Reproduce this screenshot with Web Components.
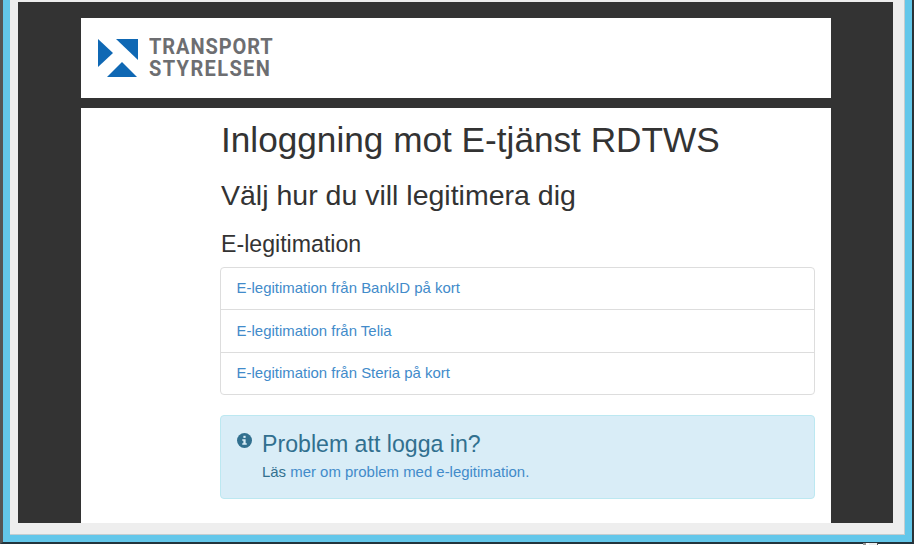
<!DOCTYPE html>
<html lang="sv">
<head>
<meta charset="utf-8">
<title>Inloggning</title>
<style>
  html, body { margin: 0; padding: 0; height: 545px; overflow: hidden; background: #fff; }
  body { font-family: "Liberation Sans", Arial, sans-serif; }
</style>
</head>
<body>
<app-window>
  <site-header slot="header"></site-header>
  <h-title level="1">Inloggning mot E-tjänst RDTWS</h-title>
  <h-title level="2">Välj hur du vill legitimera dig</h-title>
  <h-title level="3">E-legitimation</h-title>
  <login-list>
    <login-item>E-legitimation från BankID på kort</login-item>
    <login-item>E-legitimation från Telia</login-item>
    <login-item>E-legitimation från Steria på kort</login-item>
  </login-list>
  <info-box heading="Problem att logga in?">Läs <a href="#" style="color:#428bca;text-decoration:none">mer om problem med e-legitimation.</a></info-box>
</app-window>

<script>
// Outer browser window chrome plus the dark page background
class AppWindow extends HTMLElement {
  constructor(){
    super()
    this.attachShadow({mode: 'open'}).innerHTML = `
      <style>
        :host { display: block; position: relative; height: 545px; box-sizing: border-box; border-bottom: 1px solid #fff; }
        * { box-sizing: border-box; }
        .frame {
          height: 544px;
          border-left: 3px solid #555;
          border-right: 2px solid #2a3338;
          border-bottom: 2px solid #22343d;
        }
        .blue { height: 100%; border: solid #63c7ea; border-width: 0 7px 7px 7px; }
        .grey { height: 100%; background: #eee; padding: 2px 12px 12px 8px; box-shadow: inset -1px -1px 0 #c4cdd0; }
        .dark { height: 100%; background: #333; padding: 16px 62px 0 63px; }
        .head { height: 80px; background: #fff; margin-bottom: 10px; }
        .main { height: 415px; background: #fff; padding: 0 16px 0 139px; }
        /* bit of the window behind, peeking out under the frame */
        .behind { position: absolute; left: 863px; top: 543px; width: 15px; height: 2px; background: linear-gradient(90deg, #999 0 3px, #fff 3px 6px, #eee 6px 14px, #555 14px); }
      </style>
      <div class="frame"><div class="blue"><div class="grey"><div class="dark">
        <div class="head"><slot name="header"></slot></div>
        <div class="main"><slot></slot></div>
      </div></div></div></div>
      <div class="behind"></div>`
  }
}
customElements.define('app-window', AppWindow)

class SiteHeader extends HTMLElement {
  constructor(){
    super()
    this.attachShadow({mode: 'open'}).innerHTML = `
      <style>
        :host { display: flex; align-items: center; height: 80px; padding-left: 17px; gap: 11px; box-sizing: border-box; }
        svg { display: block; flex: none; margin-top: -1px; }
        .name {
          font: 700 22px/22px "Roboto", "Liberation Sans", sans-serif;
          color: #6d6e71;
          margin-top: -1px;
          transform: scaleX(.91);
          transform-origin: 0 50%;
        }
        .name span { display: block; white-space: nowrap; letter-spacing: 1px; }
        .name span + span { letter-spacing: 1.5px; }
      </style>
      <svg width="40" height="40" viewBox="0 0 40 40">
        <path fill="#0f68b4" d="M0 1 L15 15 L0 29 Z"/>
        <path fill="#0f68b4" d="M18 1 L40 1 L40 22 Z"/>
        <path fill="#0f68b4" d="M9 39 L24 24 L39 39 Z"/>
      </svg>
      <div class="name"><span>TRANSPORT</span><span>STYRELSEN</span></div>`
  }
}
customElements.define('site-header', SiteHeader)

class HTitle extends HTMLElement {
  constructor(){
    super()
    const level = this.getAttribute('level')
    const sizes = {1: [35.2, 13], 2: [28.5, 20.6], 3: [23.15, 20.7]}
    const [size, top] = sizes[level]
    this.attachShadow({mode: 'open'}).innerHTML = `
      <style>
        :host { display: block; color: #333; font-size: ${size}px; line-height: 1.1; padding: ${top}px 0 0 1px; white-space: nowrap; }
      </style>
      <slot></slot>`
  }
}
customElements.define('h-title', HTitle)

class LoginList extends HTMLElement {
  constructor(){
    super()
    this.attachShadow({mode: 'open'}).innerHTML = `
      <style>
        :host { display: block; margin-top: 9px; border: 1px solid #ddd; border-radius: 4px; background: #fff; }
        ::slotted(login-item:not(:last-child)) { border-bottom: 1px solid #ddd; }
        ::slotted(login-item:nth-child(2)) { height: 43px; }
        ::slotted(login-item:last-child) { height: 41px; }
      </style>
      <slot></slot>`
  }
}
customElements.define('login-list', LoginList)

class LoginItem extends HTMLElement {
  constructor(){
    super()
    this.attachShadow({mode: 'open'}).innerHTML = `
      <style>
        :host { display: flex; align-items: center; height: 42px; box-sizing: border-box; padding: 0 16px 1px 15.6px; font-size: 14.95px; color: #428bca; }
      </style>
      <slot></slot>`
  }
}
customElements.define('login-item', LoginItem)

class InfoBox extends HTMLElement {
  constructor(){
    super()
    const heading = this.getAttribute('heading')
    this.attachShadow({mode: 'open'}).innerHTML = `
      <style>
        :host {
          display: flex; gap: 10px; box-sizing: border-box; height: 84px; margin-top: 20px; padding: 15px 16px;
          background: #d9edf7; border: 1px solid #bce8f1; border-radius: 4px; color: #31708f; font-size: 14.95px;
        }
        svg { flex: none; margin-top: 2px; }
        .title { font-size: 23.15px; line-height: 26px; margin-bottom: 5px; }
        .body { line-height: 20px; }
      </style>
      <svg width="15" height="15" viewBox="0 0 16 16">
        <circle cx="8" cy="8" r="8" fill="#31708f"/>
        <rect x="6.8" y="3" width="2.4" height="2.2" fill="#d9edf7"/>
        <path fill="#d9edf7" d="M5.6 6.6h3.6v4.2h1.2v1.6H5.6v-1.6h1.2V8.2H5.6z"/>
      </svg>
      <div>
        <div class="title">${heading}</div>
        <div class="body"><slot></slot></div>
      </div>`
  }
}
customElements.define('info-box', InfoBox)
</script>
</body>
</html>
